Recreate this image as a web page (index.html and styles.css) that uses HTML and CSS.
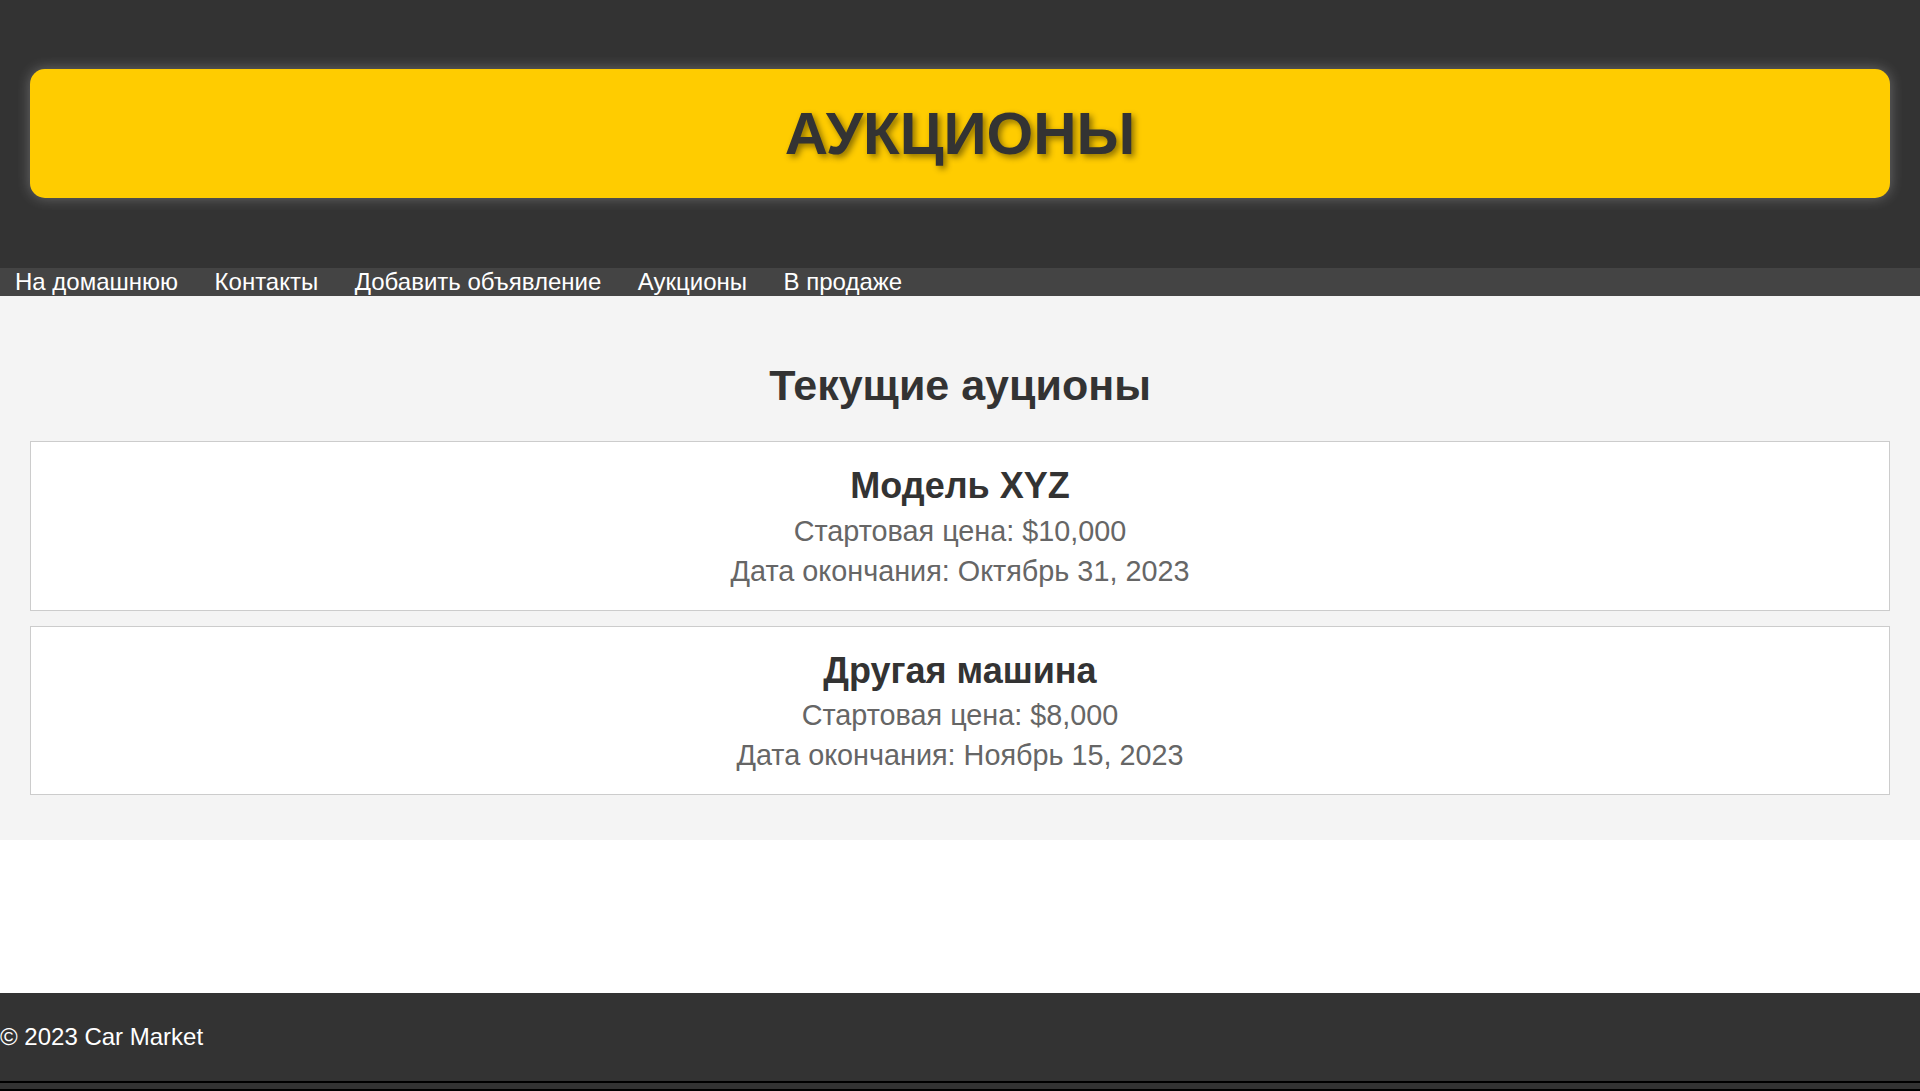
FILE: index.html
```html
<!DOCTYPE html>
<html lang="ru">
<head>
<meta charset="utf-8">
<title>Аукционы</title>
<link rel="stylesheet" href="styles.css">
</head>
<body>
<header class="site-header">
  <div class="banner">
    <h1 class="banner-title">АУКЦИОНЫ</h1>
  </div>
</header>
<nav class="site-nav">
  <a href="#" class="nav-link">На домашнюю</a>
  <a href="#" class="nav-link">Контакты</a>
  <a href="#" class="nav-link">Добавить объявление</a>
  <a href="#" class="nav-link">Аукционы</a>
  <a href="#" class="nav-link">В продаже</a>
</nav>
<main class="content">
  <h2 class="section-title">Текущие ауционы</h2>
  <div class="auction">
    <h3 class="auction-title">Модель XYZ</h3>
    <p class="auction-info">Стартовая цена: $10,000</p>
    <p class="auction-info">Дата окончания: Октябрь 31, 2023</p>
  </div>
  <div class="auction">
    <h3 class="auction-title">Другая машина</h3>
    <p class="auction-info">Стартовая цена: $8,000</p>
    <p class="auction-info">Дата окончания: Ноябрь 15, 2023</p>
  </div>
</main>
<div class="spacer"></div>
<footer class="site-footer">
  <p class="footer-text">© 2023 Car Market</p>
</footer>
<div class="bottom-strip"></div>
</body>
</html>
```

FILE: styles.css
```css
* {
  box-sizing: border-box;
}

html, body {
  margin: 0;
  padding: 0;
}

body {
  font-family: "Liberation Sans", Arial, sans-serif;
  font-size: 24px;
  background: #ffffff;
  color: #333333;
  min-height: 100vh;
  display: flex;
  flex-direction: column;
}

.site-header {
  background: #333333;
  padding: 69px 30px 70px;
}

.banner {
  background: #ffcc00;
  border-radius: 15px;
  padding: 30px 20px;
  text-align: center;
  box-shadow: 0 0 14px rgba(255, 255, 255, 0.28);
}

.banner-title {
  margin: 0;
  font-size: 60px;
  line-height: 69px;
  font-weight: bold;
  color: #333333;
  text-shadow: 3px 3px 6px rgba(0, 0, 0, 0.45);
}

.site-nav {
  background: #444444;
  height: 28px;
  display: flex;
  gap: 36.5px;
  padding-left: 15px;
}

.nav-link {
  color: #ffffff;
  text-decoration: none;
  font-size: 24px;
  line-height: 28px;
}

.content {
  background: #f4f4f4;
  padding: 30px 30px 30px;
}

.section-title {
  margin: 35px 0 31px;
  font-size: 43px;
  font-weight: bold;
  text-align: center;
  color: #333333;
}

.auction {
  background: #ffffff;
  border: 1px solid #cccccc;
  padding: 23px 20px 22px;
  margin-bottom: 15px;
  text-align: center;
}

.auction-title {
  margin: 0 0 7.5px;
  font-size: 36px;
  font-weight: bold;
  color: #333333;
}

.auction-info {
  margin: 0 0 7px;
  font-size: 28.8px;
  color: #666666;
}

.auction-info:last-child {
  margin-bottom: 0;
}

.spacer {
  flex: 1;
  background: #ffffff;
}

.site-footer {
  background: #333333;
  padding: 30px 0;
}

.footer-text {
  margin: 0;
  color: #ffffff;
  font-size: 24px;
}

.bottom-strip {
  height: 10px;
  background: #333333;
  border-top: 2px solid #000000;
  border-bottom: 2px solid #000000;
}
```
